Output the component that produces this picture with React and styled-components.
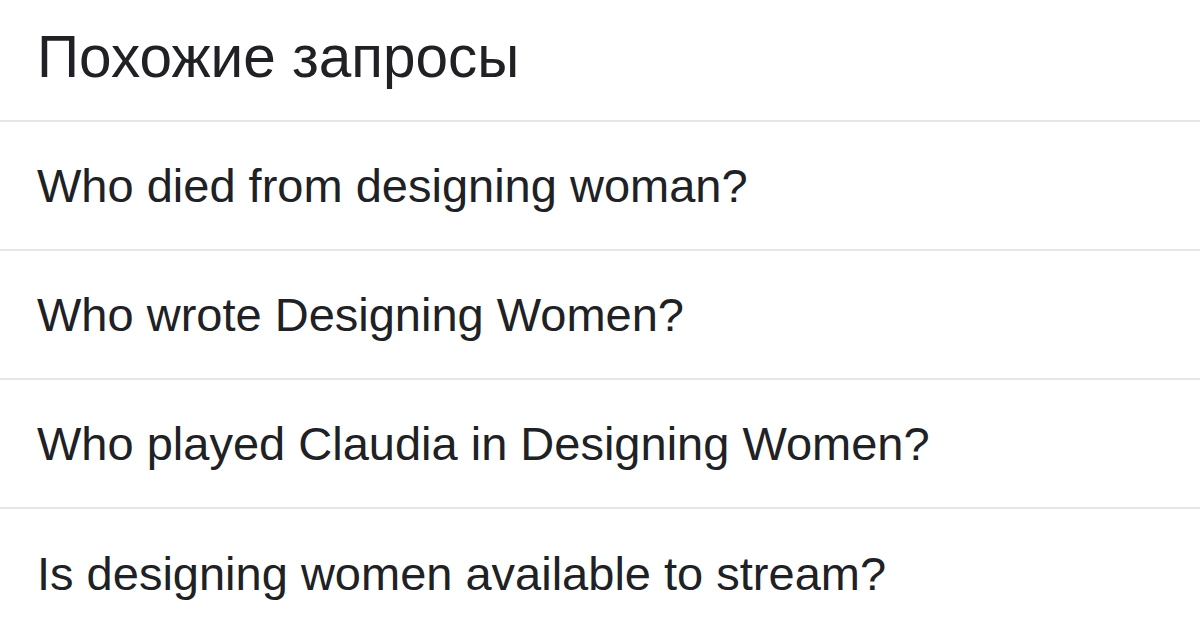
import React from "react";
import styled, { createGlobalStyle } from "styled-components";

const GlobalStyle = createGlobalStyle`
  html, body {
    margin: 0;
    padding: 0;
    background: #ffffff;
  }
  body {
    font-family: "Liberation Sans", Arial, sans-serif;
    color: #202124;
  }
`;

const related = [
  "Who died from designing woman?",
  "Who wrote Designing Women?",
  "Who played Claudia in Designing Women?",
  "Is designing women available to stream?",
];

const App = () => {
  return (
    <>
      <GlobalStyle />
      <Panel>
        <Header>Похожие запросы</Header>
        {related.map((query, i) => (
          <Row key={query} $last={i === related.length - 1}>
            {query}
          </Row>
        ))}
      </Panel>
    </>
  );
};

export default App;

const Panel = styled.div`
  width: 1200px;
  height: 630px;
  overflow: hidden;
  display: flex;
  flex-direction: column;
`;

const Header = styled.div`
  height: 122px;
  flex-shrink: 0;
  box-sizing: border-box;
  display: flex;
  align-items: center;
  padding: 0 0 8px 37px;
  font-size: 58.5px;
  border-bottom: 2px solid #e6e6e6;
`;

const Row = styled.div`
  height: 129px;
  box-sizing: border-box;
  flex-shrink: 0;
  display: flex;
  align-items: center;
  padding-left: 37px;
  font-size: 47px;
  border-bottom: ${({ $last }) => ($last ? "none" : "2px solid #e6e6e6")};
`;
